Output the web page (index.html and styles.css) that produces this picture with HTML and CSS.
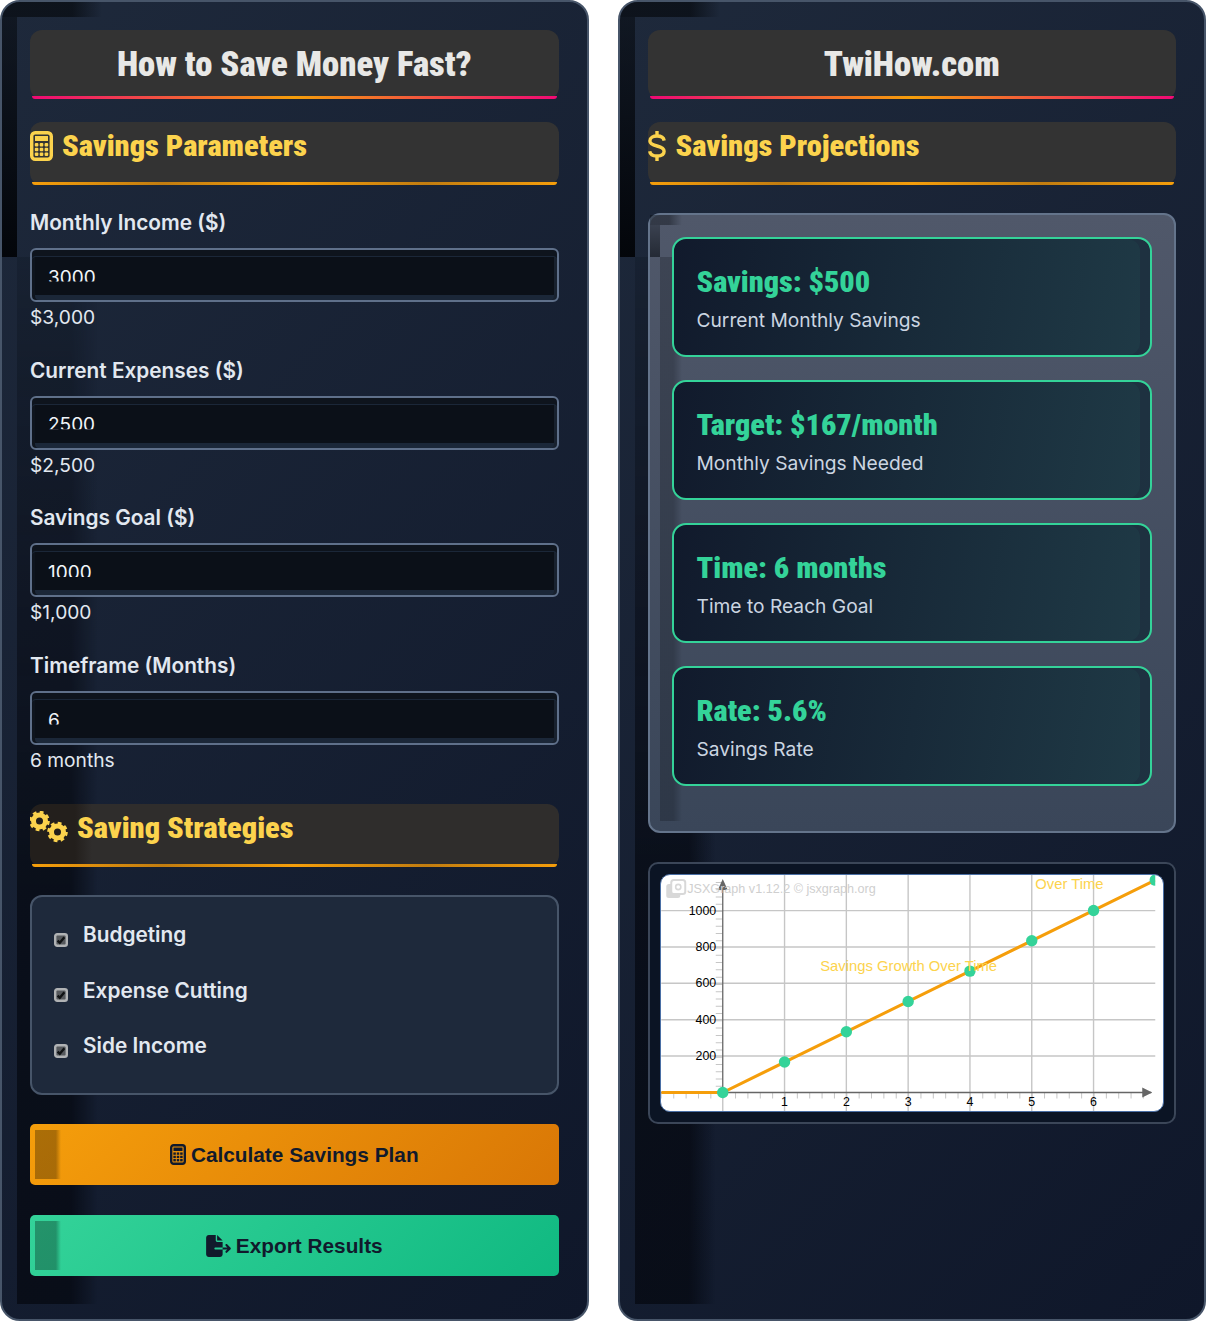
FILE: index.html
```html
<!DOCTYPE html>
<html lang="en">

<head>
    <meta charset="UTF-8">
    <title>How to Save Money Fast?</title>
    <link rel="stylesheet" href="styles.css">
</head>

<body>

    <div class="page">

        <div class="panel">
            <h1 class="title">How to Save Money Fast?</h1>

            <h2 class="head">
                <svg class="ic-calc" viewBox="0 0 23 30"><rect x="1.7" y="1.7" width="19.6" height="26.6" rx="3.5" fill="none" stroke="currentColor" stroke-width="3.4"/><rect x="5" y="5" width="13" height="5" fill="currentColor"/><g fill="currentColor"><rect x="4.8" y="12" width="3.6" height="3.4" rx="1"/><rect x="9.7" y="12" width="3.6" height="3.4" rx="1"/><rect x="14.6" y="12" width="3.6" height="3.4" rx="1"/><rect x="4.8" y="16.8" width="3.6" height="3.4" rx="1"/><rect x="9.7" y="16.8" width="3.6" height="3.4" rx="1"/><rect x="14.6" y="16.8" width="3.6" height="3.4" rx="1"/><rect x="4.8" y="21.5" width="3.6" height="3.4" rx="1"/><rect x="9.7" y="21.5" width="3.6" height="3.4" rx="1"/><rect x="14.6" y="21.5" width="3.6" height="3.4" rx="1"/></g></svg>
                Savings Parameters
            </h2>

            <div class="field">
                <label class="lab">Monthly Income ($)</label>
                <div class="inp-box"><input class="inp" type="number" value="3000"></div>
                <div class="val">$3,000</div>
            </div>
            <div class="field">
                <label class="lab">Current Expenses ($)</label>
                <div class="inp-box"><input class="inp" type="number" value="2500"></div>
                <div class="val">$2,500</div>
            </div>
            <div class="field">
                <label class="lab">Savings Goal ($)</label>
                <div class="inp-box"><input class="inp" type="number" value="1000"></div>
                <div class="val">$1,000</div>
            </div>
            <div class="field">
                <label class="lab">Timeframe (Months)</label>
                <div class="inp-box"><input class="inp" type="number" value="6"></div>
                <div class="val">6 months</div>
            </div>

            <h2 class="head head-strat">
                <svg class="ic-gears" viewBox="0 0 38 34" fill="none" stroke="currentColor"><circle cx="9.5" cy="10" r="6" stroke-width="5"/><circle cx="9.5" cy="10" r="8.6" stroke-width="3.4" stroke-dasharray="3.6 3.15"/><circle cx="27.5" cy="21" r="6" stroke-width="5"/><circle cx="27.5" cy="21" r="8.6" stroke-width="3.4" stroke-dasharray="3.6 3.15"/></svg>
                Saving Strategies
            </h2>

            <div class="list">
                <label class="row"><svg class="chk" viewBox="0 0 14 14"><rect x="1.2" y="1.2" width="11.6" height="11.6" rx="2" fill="#55585c" stroke="#b0b2b4" stroke-width="2.4"/><path d="M3.6 7.6l2.2 2.2 4.6-5.6" fill="none" stroke="#101214" stroke-width="2.4"/></svg>Budgeting</label>
                <label class="row"><svg class="chk" viewBox="0 0 14 14"><rect x="1.2" y="1.2" width="11.6" height="11.6" rx="2" fill="#55585c" stroke="#b0b2b4" stroke-width="2.4"/><path d="M3.6 7.6l2.2 2.2 4.6-5.6" fill="none" stroke="#101214" stroke-width="2.4"/></svg>Expense Cutting</label>
                <label class="row"><svg class="chk" viewBox="0 0 14 14"><rect x="1.2" y="1.2" width="11.6" height="11.6" rx="2" fill="#55585c" stroke="#b0b2b4" stroke-width="2.4"/><path d="M3.6 7.6l2.2 2.2 4.6-5.6" fill="none" stroke="#101214" stroke-width="2.4"/></svg>Side Income</label>
            </div>

            <button class="btn btn-orange">
                <svg class="ic-btn-calc" viewBox="0 0 23 30"><rect x="1.7" y="1.7" width="19.6" height="26.6" rx="3.5" fill="none" stroke="currentColor" stroke-width="3.4"/><rect x="5" y="5" width="13" height="5" fill="currentColor"/><g fill="currentColor"><rect x="4.8" y="12" width="3.6" height="3.4"/><rect x="9.7" y="12" width="3.6" height="3.4"/><rect x="14.6" y="12" width="3.6" height="3.4"/><rect x="4.8" y="16.8" width="3.6" height="3.4"/><rect x="9.7" y="16.8" width="3.6" height="3.4"/><rect x="14.6" y="16.8" width="3.6" height="3.4"/><rect x="4.8" y="21.5" width="3.6" height="3.4"/><rect x="9.7" y="21.5" width="3.6" height="3.4"/><rect x="14.6" y="21.5" width="3.6" height="3.4"/></g></svg>
                Calculate Savings Plan
            </button>
            <button class="btn btn-green">
                <svg class="ic-export" viewBox="0 0 576 512"><path fill="currentColor" d="M0 64C0 28.7 28.7 0 64 0H224V128c0 17.7 14.3 32 32 32H384V288H216c-13.3 0-24 10.7-24 24s10.7 24 24 24H384V448c0 35.3-28.7 64-64 64H64c-35.3 0-64-28.7-64-64V64zM384 336V288H494.1l-39-39c-9.4-9.4-9.4-24.6 0-33.9s24.6-9.4 33.9 0l80 80c9.4 9.4 9.4 24.6 0 33.9l-80 80c-9.4 9.4-24.6 9.4-33.9 0s-9.4-24.6 0-33.9l39-39H384zm0-208H256V0L384 128z"/></svg>
                Export Results
            </button>
        </div>

        <div class="panel">
            <h1 class="title">TwiHow.com</h1>

            <h2 class="head head-proj">
                <svg class="ic-dollar" viewBox="0 0 18 32" fill="none" stroke="currentColor" stroke-width="3.4"><path d="M16.2 10.6C15.6 7.4 12.6 6 9 6S1.9 7.6 1.9 11C1.9 14 5 15 9 16s7.1 2.2 7.1 5.2C16.1 24.4 13 26 9 26s-6.8-1.5-7.3-4.8"/><path d="M9 1v5M9 26v5"/></svg>
                Savings Projections
            </h2>

            <div class="stack">
                <div class="stat">
                    <div class="stat-big">Savings: $500</div>
                    <div class="stat-sub">Current Monthly Savings</div>
                </div>
                <div class="stat">
                    <div class="stat-big">Target: $167/month</div>
                    <div class="stat-sub">Monthly Savings Needed</div>
                </div>
                <div class="stat">
                    <div class="stat-big">Time: 6 months</div>
                    <div class="stat-sub">Time to Reach Goal</div>
                </div>
                <div class="stat">
                    <div class="stat-big">Rate: 5.6%</div>
                    <div class="stat-sub">Savings Rate</div>
                </div>
            </div>

            <div class="chart">
                <svg class="plot" viewBox="0 0 502 236">
                    <defs><clipPath id="cut"><rect width="494" height="236"/></clipPath></defs>

                    <g stroke="#c6c6c6" stroke-width="1.4">
                        <path d="M0 35.6H494M0 72H494M0 108.3H494M0 144.7H494M0 181H494"/>
                        <path d="M123.3 0V236M185.1 0V236M246.9 0V236M308.7 0V236M370.5 0V236M432.3 0V236M61.5 218V236"/>
                    </g>

                    <path d="M0 220.5H494" stroke="#c6c6c6" stroke-width="6" stroke-dasharray="1 11.36" stroke-dashoffset="-12"/>
                    <path d="M58 6V218" stroke="#c6c6c6" stroke-width="7" stroke-dasharray="1 6.28" stroke-dashoffset="-1"/>

                    <path d="M0 217.5H490M61.5 217.5V8" stroke="#666" stroke-width="1.3" fill="none"/>
                    <path d="M61.5 4l5 11h-10zM491 217.5l-10 5v-10z" fill="#666"/>

                    <g font-family="'Liberation Sans', Arial, sans-serif" font-size="12.4" fill="#000">
                        <g text-anchor="end">
                            <text x="55" y="40">1000</text>
                            <text x="55" y="76">800</text>
                            <text x="55" y="112">600</text>
                            <text x="55" y="149">400</text>
                            <text x="55" y="185">200</text>
                        </g>
                        <g text-anchor="middle">
                            <text x="123.3" y="231">1</text>
                            <text x="185.1" y="231">2</text>
                            <text x="246.9" y="231">3</text>
                            <text x="308.7" y="231">4</text>
                            <text x="370.5" y="231">5</text>
                            <text x="432.3" y="231">6</text>
                        </g>
                    </g>

                    <rect x="5" y="9" width="14" height="14" rx="2.5" fill="#d8d8d8"/>
                    <rect x="10" y="5" width="14" height="14" rx="2.5" fill="#fff" stroke="#d8d8d8" stroke-width="2"/>
                    <circle cx="17" cy="12" r="2.6" fill="none" stroke="#d8d8d8" stroke-width="1.6"/>
                    <text class="mark" x="26" y="18">JSXGraph v1.12.2 © jsxgraph.org</text>

                    <g clip-path="url(#cut)">
                        <path d="M0 217.5H61.5L494 5.1" fill="none" stroke="#f59e0b" stroke-width="3"/>
                        <g fill="#34d399">
                            <circle cx="61.5" cy="217.5" r="5.7"/>
                            <circle cx="123.3" cy="187" r="5.7"/>
                            <circle cx="185.1" cy="156.8" r="5.7"/>
                            <circle cx="246.9" cy="126.5" r="5.7"/>
                            <circle cx="308.7" cy="96.1" r="5.7"/>
                            <circle cx="370.5" cy="65.8" r="5.7"/>
                            <circle cx="432.3" cy="35.5" r="5.7"/>
                            <circle cx="494" cy="5.1" r="5.7"/>
                        </g>
                    </g>

                    <text class="plot-title" x="159" y="96">Savings Growth Over Time</text>
                    <text class="plot-title" x="374" y="14">Over Time</text>
                </svg>
            </div>
        </div>

    </div>

</body>

</html>
```

FILE: styles.css
```css
* {
    box-sizing: border-box;
}

body {
    margin: 0;
    background: #fff;
    font-family: "Inter", "Liberation Sans", sans-serif;
}

.page {
    display: grid;
    grid-template-columns: 1fr 1fr;
    gap: 29px;
    height: 1321px;
}

.panel {
    position: relative;
    padding: 28px;
    border: 2px solid #475569;
    border-radius: 20px;
    overflow: hidden;
    background: linear-gradient(135deg, #1e293b, #0f172a);
}

.panel > * {
    position: relative;
    z-index: 1;
}

/* dark strips along the top and left of the panels */
.panel::before {
    content: "";
    position: absolute;
    left: 0;
    top: 0;
    width: 100px;
    height: 255px;
    background:
        linear-gradient(to right, rgba(8, 12, 18, 0.75) 70%, transparent) 0 0 / 100% 15px no-repeat,
        linear-gradient(to bottom, rgba(8, 12, 18, 0.6), rgba(2, 4, 8, 0.95)) 0 15px / 15px 240px no-repeat;
}

.panel::after {
    content: "";
    position: absolute;
    left: 15px;
    top: 255px;
    width: 80px;
    height: 1047px;
    background: linear-gradient(to right, rgba(2, 4, 10, 0.6) 68%, transparent);
    -webkit-mask-image: linear-gradient(to bottom, rgba(0, 0, 0, 0.25), #000 60%);
    mask-image: linear-gradient(to bottom, rgba(0, 0, 0, 0.25), #000 60%);
}

.title {
    position: relative;
    height: 69px;
    margin: 0 0 23px;
    border-radius: 12px;
    background: #333;
    color: #e8e8e6;
    font-family: "Roboto Condensed", "Roboto", sans-serif;
    font-stretch: 75%;
    font-size: 34.7px;
    font-weight: 900;
    line-height: 68px;
    text-align: center;
}

.title::after {
    content: "";
    position: absolute;
    left: 2px;
    right: 2px;
    bottom: 0;
    height: 3px;
    border-radius: 0 0 8px 8px;
    background: linear-gradient(90deg, #f00a74, #f59e0b 50%, #f00a74);
}

.head {
    position: relative;
    display: flex;
    gap: 9px;
    height: 63px;
    margin: 0 0 24px;
    border-radius: 12px;
    background: #333;
    color: #fcd34d;
    font-family: "Roboto Condensed", "Roboto", sans-serif;
    font-stretch: 75%;
    font-size: 30.4px;
    font-weight: 900;
    line-height: 48px;
}

.head::after {
    content: "";
    position: absolute;
    left: 2px;
    right: 2px;
    bottom: 0;
    height: 3px;
    border-radius: 0 0 8px 8px;
    background: linear-gradient(90deg, #f59e0b, #c27d10 25%, #f59e0b 50%, #c27d10 75%, #f59e0b);
}

.head-proj {
    margin-bottom: 28px;
}

.ic-calc {
    width: 23px;
    height: 30px;
    margin-top: 9px;
}

.ic-dollar {
    width: 18px;
    height: 32px;
    margin-top: 8px;
    margin-right: 1px;
}

.ic-gears {
    width: 38px;
    height: 34px;
    margin-top: 7px;
}

.field {
    height: 147.7px;
}

.lab {
    display: block;
    height: 39px;
    color: #e2e8f0;
    font-size: 20.8px;
    font-weight: 600;
    line-height: 28px;
}

.inp-box {
    height: 54px;
    border: 2px solid #5f708a;
    border-radius: 6px;
    background: #0b1018;
    box-shadow: inset 0 6px 0 #0e141d, inset 0 7px 0 #1b2738, inset 3px 0 0 #0e141d, inset -3px 0 0 #18212e, inset 0 -5px 0 #1b2738;
}

/* the digits sit low in the box and get cut off at the bottom */
.inp {
    display: block;
    width: 100%;
    height: 50px;
    padding: 4px 16px 0;
    border: none;
    outline: none;
    background: none;
    color: #f1f5f9;
    font-family: "Inter", sans-serif;
    font-size: 19px;
    clip-path: inset(0 0 18.5px 0);
}

.val {
    margin-top: 2px;
    color: #e2e8f0;
    font-size: 19.2px;
    line-height: 26px;
}

.head-strat {
    margin-top: 4px;
    margin-bottom: 28px;
    background: linear-gradient(to right, #231f1c 45px, #2f2d2c 62px);
}

.list {
    height: 200px;
    margin-bottom: 29px;
    padding: 10px 22px;
    border: 2px solid #475569;
    border-radius: 12px;
    background: #1e293b;
}

.row {
    display: flex;
    height: 55.5px;
    align-items: center;
    gap: 15px;
    color: #e2e8f0;
    font-size: 20.8px;
    font-weight: 600;
}

.chk {
    width: 14px;
    height: 14px;
    margin-top: 10px;
}

.btn {
    position: relative;
    display: flex;
    width: 100%;
    height: 61px;
    margin-bottom: 30px;
    padding-top: 2px;
    align-items: center;
    justify-content: center;
    gap: 5px;
    border: none;
    border-radius: 5px;
    color: #111a2c;
    font-family: "Liberation Sans", Arial, sans-serif;
    font-size: 20.8px;
    font-weight: 700;
}

.btn::before {
    content: "";
    position: absolute;
    left: 5px;
    top: 6px;
    bottom: 6px;
    width: 26px;
    background: linear-gradient(to right, rgba(0, 0, 0, 0.3) 80%, transparent);
}

.btn-orange {
    background: linear-gradient(135deg, #f59e0b, #d97706);
}

.btn-green {
    background: linear-gradient(135deg, #34d399, #10b981);
}

.ic-btn-calc {
    width: 16px;
    height: 21px;
}

.ic-export {
    width: 25px;
    height: 22px;
}

.stack {
    position: relative;
    height: 620px;
    margin-bottom: 29px;
    padding: 22px;
    border: 2px solid #64748b;
    border-radius: 12px;
    background: linear-gradient(to bottom, #50586a, #3a4659);
}

.stack::before {
    content: "";
    position: absolute;
    left: 0;
    top: 0;
    width: 32px;
    height: 42px;
    background:
        linear-gradient(to right, rgba(8, 12, 18, 0.4) 60%, transparent) 0 0 / 100% 10px no-repeat,
        linear-gradient(to bottom, rgba(8, 12, 18, 0.3), rgba(8, 12, 18, 0.6)) 0 10px / 10px 32px no-repeat;
}

.stack::after {
    content: "";
    position: absolute;
    left: 10px;
    top: 42px;
    width: 22px;
    bottom: 10px;
    background: linear-gradient(to right, rgba(8, 12, 18, 0.25) 60%, transparent);
}

.stat {
    position: relative;
    z-index: 1;
    height: 120px;
    margin-bottom: 23px;
    padding: 25px 23px;
    border: 2px solid #34d399;
    border-radius: 14px;
    background: linear-gradient(100deg, #111a2c, #1f3a46);
    box-shadow: inset -10px 0 0 rgba(30, 41, 59, 0.5);
}

.stat-big {
    color: #34d399;
    font-family: "Roboto Condensed", "Roboto", sans-serif;
    font-stretch: 75%;
    font-size: 30.2px;
    font-weight: 900;
    line-height: 36px;
}

.stat-sub {
    margin-top: 7px;
    color: #cbd5e1;
    font-size: 19.2px;
    line-height: 26px;
}

.chart {
    height: 262px;
    padding: 10px;
    border: 2px solid #3b4658;
    border-radius: 10px;
    background: #0b1424;
}

.plot {
    display: block;
    width: 100%;
    height: 238px;
    border: 1px solid #4a6fa5;
    border-radius: 10px;
    background: #fff;
}

.mark {
    fill: #cfcfcf;
    font-family: "Liberation Sans", Arial, sans-serif;
    font-size: 12.6px;
}

.plot-title {
    fill: #fcd34d;
    font-family: "Liberation Sans", Arial, sans-serif;
    font-size: 14.8px;
}
```
